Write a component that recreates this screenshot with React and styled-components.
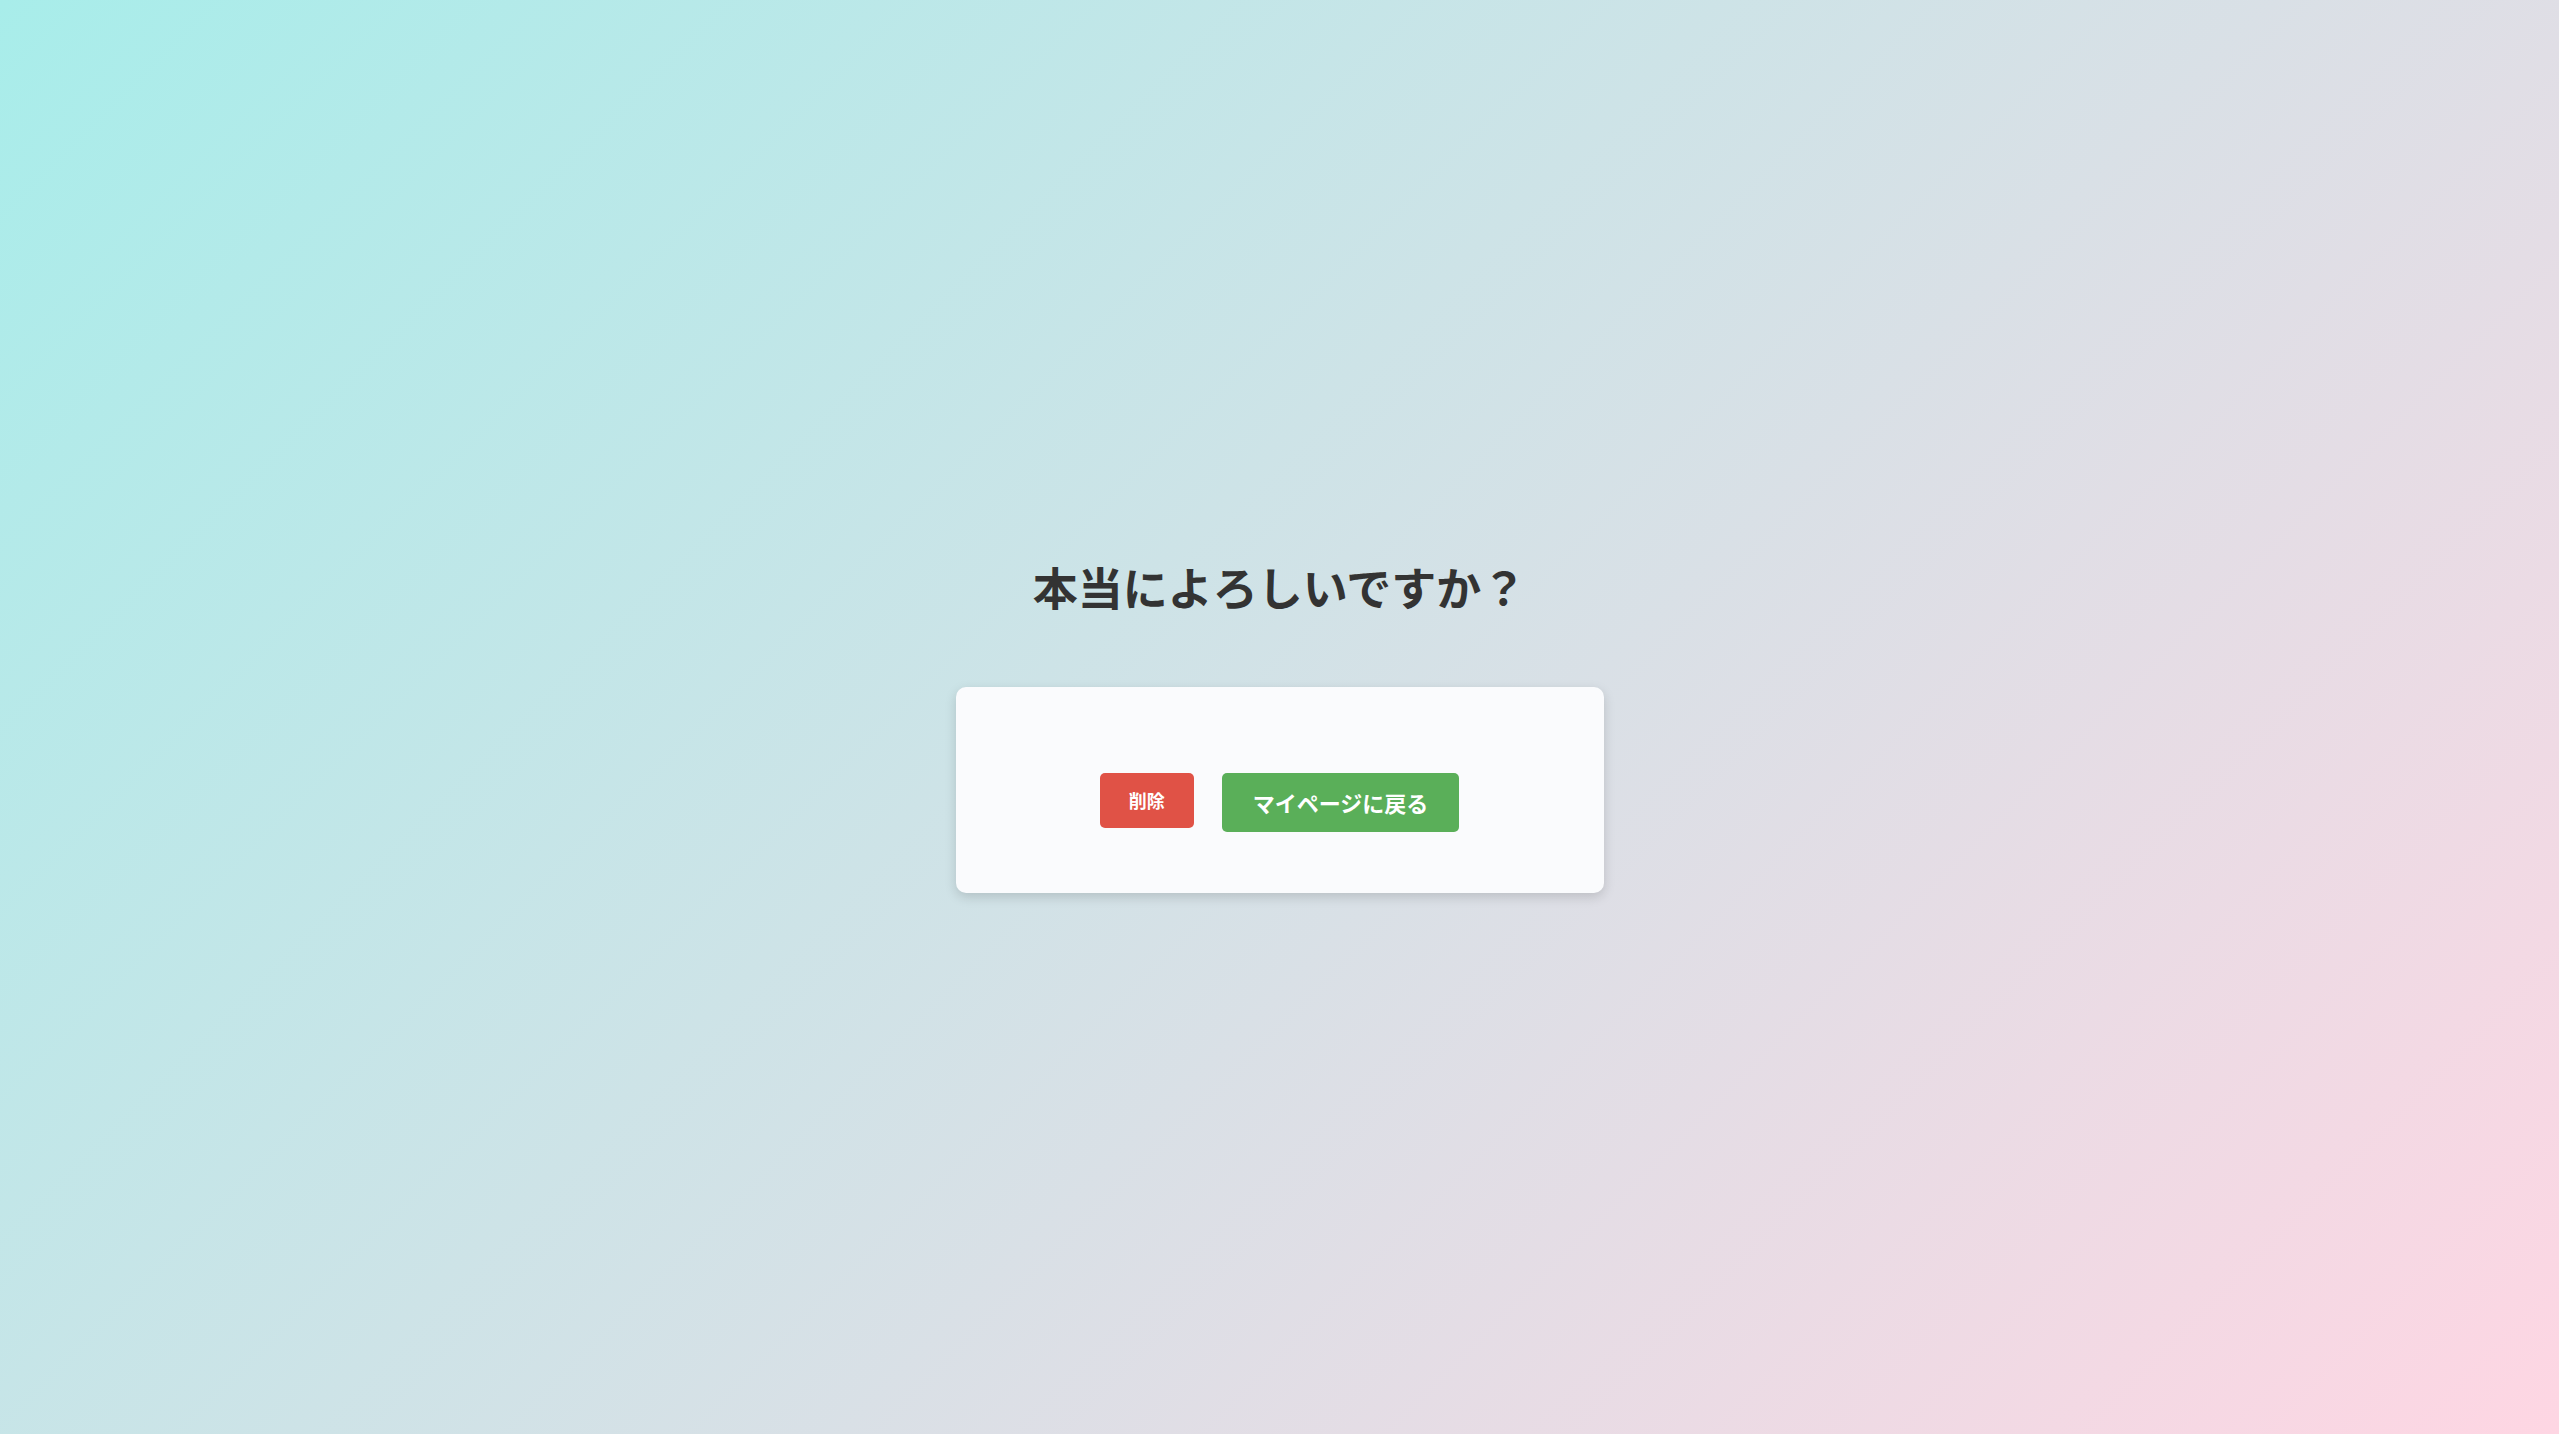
import React from "react";
import { styled, createGlobalStyle } from "styled-components";

const GlobalStyle = createGlobalStyle`
  html, body {
    margin: 0;
    padding: 0;
    height: 100%;
  }
  body {
    font-family: "Noto Sans CJK JP", "Noto Sans", sans-serif;
    background: linear-gradient(135deg, #a8edea 0%, #fed6e3 100%);
    background-attachment: fixed;
  }
  #root {
    min-height: 100vh;
  }
`;

const Page = styled.div`
  min-height: 100vh;
  display: flex;
  flex-direction: column;
  justify-content: center;
  align-items: center;
  box-sizing: border-box;
  padding-top: 12px;
`;

const Title = styled.h1`
  margin: 0 0 68px;
  font-size: 45px;
  font-weight: 700;
  color: #333;
  line-height: 65px;
`;

const Card = styled.div`
  width: 648px;
  box-sizing: border-box;
  padding: 86px 0 61px;
  background: #fafbfd;
  border-radius: 10px;
  box-shadow: 0 4px 12px rgba(0, 0, 0, 0.15);
  display: flex;
  justify-content: center;
  align-items: flex-start;
  gap: 28px;
`;

const Button = styled.button`
  border: none;
  border-radius: 5px;
  padding: ${(p) => (p.$small ? "14px 29px" : "14px 31px")};
  font-family: "Noto Sans CJK JP", "Noto Sans", sans-serif;
  font-weight: 700;
  font-size: ${(p) => (p.$small ? "18px" : "22px")};
  line-height: ${(p) => (p.$small ? "27px" : "31px")};
  color: #fff;
  background: ${(p) => (p.$danger ? "#e05246" : "#5aaf59")};
  cursor: pointer;
`;

export default function App() {
  return (
    <>
      <GlobalStyle />
      <Page>
        <Title>本当によろしいですか？</Title>
        <Card>
          <Button $danger $small>削除</Button>
          <Button>マイページに戻る</Button>
        </Card>
      </Page>
    </>
  );
}
